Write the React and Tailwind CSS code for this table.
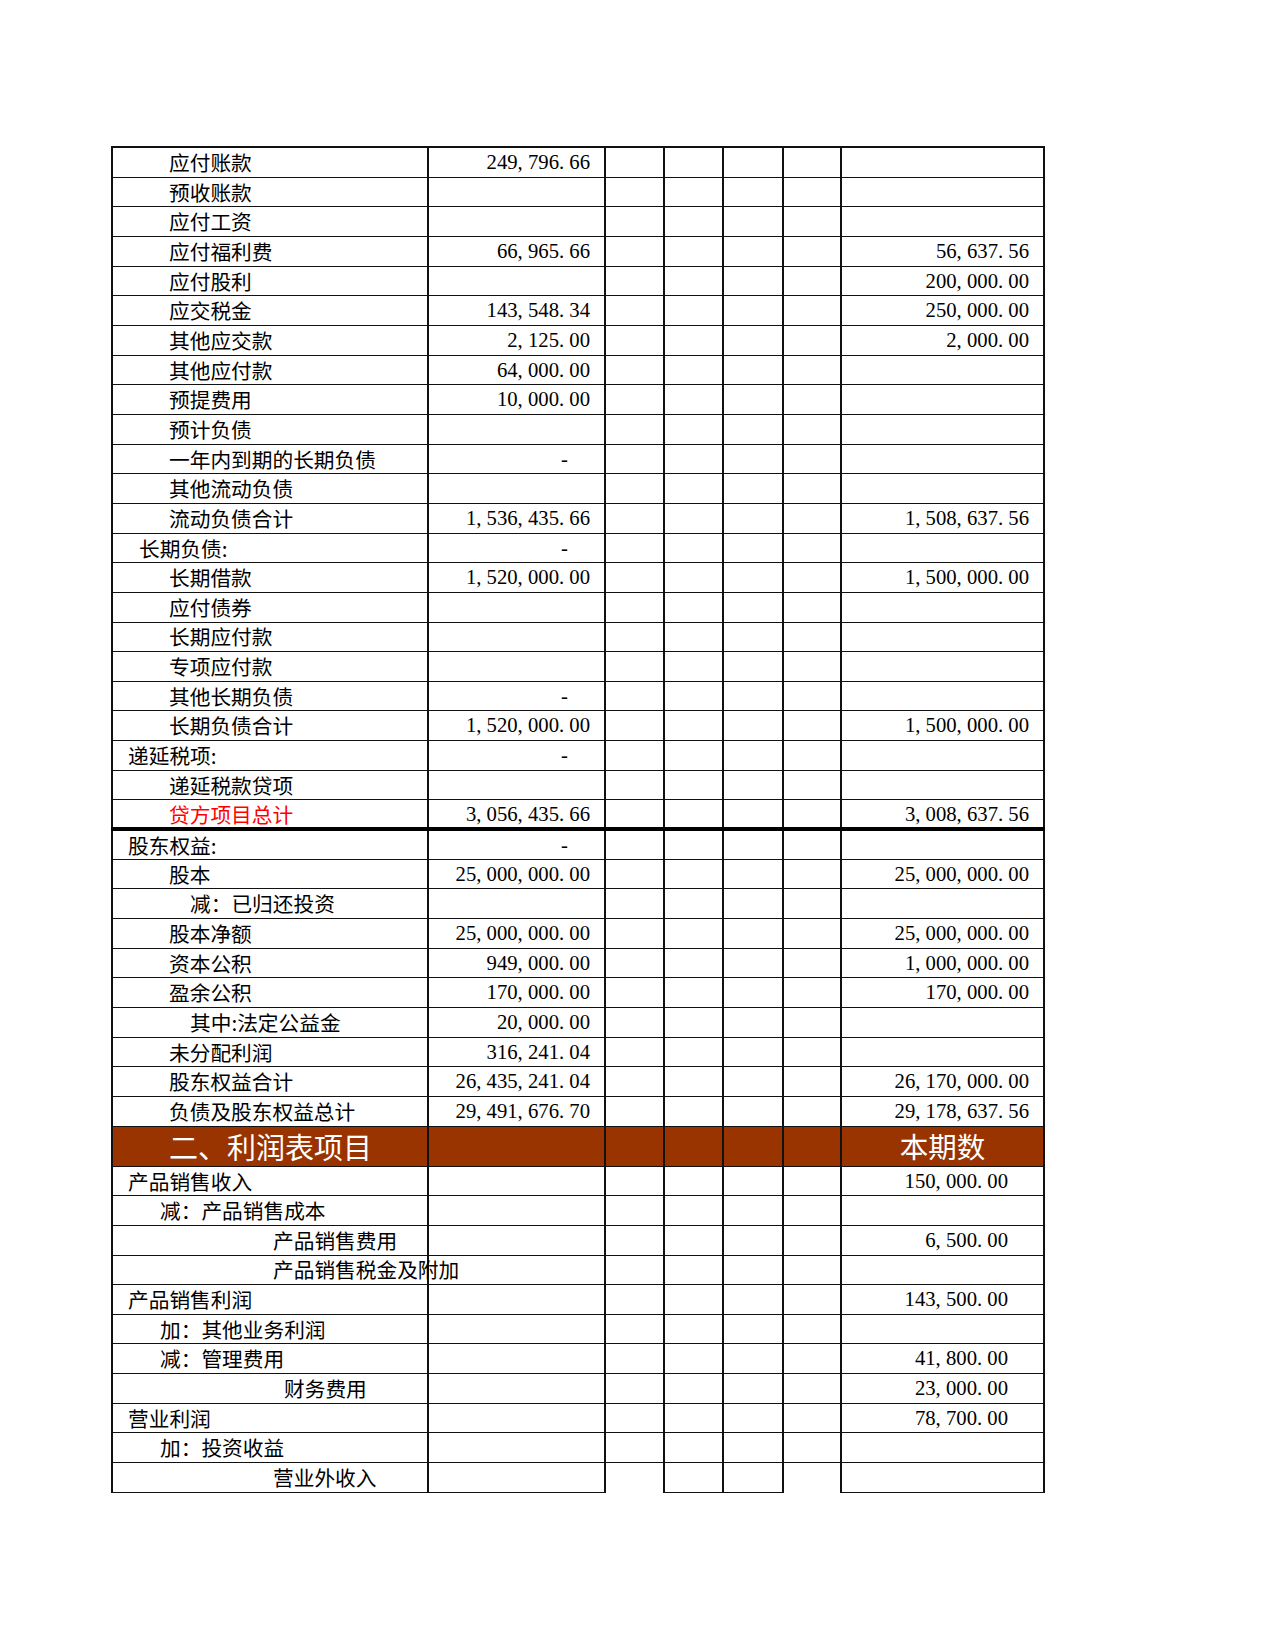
import React from "react";

const CJK = { fontFamily: '"Noto Sans CJK SC", "Noto Sans", sans-serif' };
const NUMF = { fontFamily: '"Liberation Serif", "Noto Sans CJK SC", serif' };

function Num({ v }) {
  return (
    <span style={NUMF} className="text-[20.7px] leading-none whitespace-nowrap">
      {v.split("").map((c, i) =>
        c === "," || c === "." ? (
          <span key={i} className="inline-block w-[0.5em] text-left">
            {c}
          </span>
        ) : (
          <span key={i}>{c}</span>
        )
      )}
    </span>
  );
}

const top = [
  ["应付账款", 56, "249,796.66", ""],
  ["预收账款", 56, "", ""],
  ["应付工资", 56, "", ""],
  ["应付福利费", 56, "66,965.66", "56,637.56"],
  ["应付股利", 56, "", "200,000.00"],
  ["应交税金", 56, "143,548.34", "250,000.00"],
  ["其他应交款", 56, "2,125.00", "2,000.00"],
  ["其他应付款", 56, "64,000.00", ""],
  ["预提费用", 56, "10,000.00", ""],
  ["预计负债", 56, "", ""],
  ["一年内到期的长期负债", 56, "-", ""],
  ["其他流动负债", 56, "", ""],
  ["流动负债合计", 56, "1,536,435.66", "1,508,637.56"],
  ["长期负债:", 26, "-", ""],
  ["长期借款", 56, "1,520,000.00", "1,500,000.00"],
  ["应付债券", 56, "", ""],
  ["长期应付款", 56, "", ""],
  ["专项应付款", 56, "", ""],
  ["其他长期负债", 56, "-", ""],
  ["长期负债合计", 56, "1,520,000.00", "1,500,000.00"],
  ["递延税项:", 15, "-", ""],
  ["递延税款贷项", 56, "", ""],
  ["贷方项目总计", 56, "3,056,435.66", "3,008,637.56", "red"],
  ["股东权益:", 15, "-", ""],
  ["股本", 56, "25,000,000.00", "25,000,000.00"],
  ["减：已归还投资", 77, "", ""],
  ["股本净额", 56, "25,000,000.00", "25,000,000.00"],
  ["资本公积", 56, "949,000.00", "1,000,000.00"],
  ["盈余公积", 56, "170,000.00", "170,000.00"],
  ["其中:法定公益金", 77, "20,000.00", ""],
  ["未分配利润", 56, "316,241.04", ""],
  ["股东权益合计", 56, "26,435,241.04", "26,170,000.00"],
  ["负债及股东权益总计", 56, "29,491,676.70", "29,178,637.56"],
];

const bottom = [
  ["产品销售收入", 15, "150,000.00"],
  ["减：产品销售成本", 47, ""],
  ["产品销售费用", 160, "6,500.00"],
  ["产品销售税金及附加", 160, ""],
  ["产品销售利润", 15, "143,500.00"],
  ["加：其他业务利润", 47, ""],
  ["减：管理费用", 47, "41,800.00"],
  ["财务费用", 171, "23,000.00"],
  ["营业利润", 15, "78,700.00"],
  ["加：投资收益", 47, ""],
  ["营业外收入", 160, ""],
];

const GRID = "grid grid-cols-[318px_177px_59px_59px_60px_58px_203px]";

function NumCell({ v, pr }) {
  return (
    <div
      className={
        "flex items-center justify-end border-r-2 border-[#111] " +
        (pr === 36 ? "pr-[36px]" : "pr-[14px]")
      }
    >
      {v === "-" ? (
        <span style={NUMF} className="text-[20.7px] leading-none">-</span>
      ) : v ? (
        <Num v={v} />
      ) : null}
    </div>
  );
}

function Label({ text, indent, red }) {
  return (
    <div className="relative flex items-center border-l-2 border-r-2 border-[#111] overflow-visible">
      <span
        style={{ ...CJK, paddingLeft: indent }}
        className={
          "text-[20.7px] leading-none whitespace-nowrap relative z-10 " +
          (red ? "text-[#ff0000]" : "text-black")
        }
      >
        {text}
      </span>
    </div>
  );
}

function Empty() {
  return <div className="border-r-2 border-[#111]" />;
}

export default function App() {
  return (
    <div className="w-[1275px] min-h-[1650px] bg-white pt-[146px]">
      <div className="ml-[111px] w-[934px] border-t-2 border-[#111]">
        {top.map(([label, indent, a, b, red], i) => (
          <div
            key={i}
            className={
              GRID +
              " " +
              (label === "贷方项目总计"
                ? "h-[31px] border-b-[4px] border-black"
                : label === "股东权益:"
                ? "h-[28.3px] border-b-[1.5px] border-[#111]"
                : "h-[29.67px] border-b-[1.5px] border-[#111]")
            }
          >
            <Label text={label} indent={indent} red={!!red} />
            <NumCell v={a} pr={a === "-" ? 36 : 14} />
            <Empty />
            <Empty />
            <Empty />
            <Empty />
            <NumCell v={b} pr={14} />
          </div>
        ))}
        <div className={GRID + " h-[40px] bg-[#993300] border-b-[1.5px] border-[#111]"}>
          <div className="flex items-center border-l-2 border-r-2 border-[#111]">
            <span style={CJK} className="pl-[56px] text-[29px] leading-none text-white whitespace-nowrap">
              二、利润表项目
            </span>
          </div>
          <Empty />
          <Empty />
          <Empty />
          <Empty />
          <Empty />
          <div className="flex items-center justify-center border-r-2 border-[#111]">
            <span style={CJK} className="text-[28.5px] leading-none text-white whitespace-nowrap">
              本期数
            </span>
          </div>
        </div>
        {bottom.map(([label, indent, v], i) => {
          const lastRow = i === bottom.length - 1;
          const bb = "border-b-[1.5px] border-[#111]";
          return (
            <div key={i} className={GRID + " h-[29.64px]"}>
              <div className={"relative flex items-center border-l-2 border-r-2 border-[#111] " + bb}>
                <span
                  style={{ ...CJK, paddingLeft: indent }}
                  className="text-[20.7px] leading-none whitespace-nowrap text-black relative z-10"
                >
                  {label}
                </span>
              </div>
              <div className={"border-r-2 border-[#111] " + bb} />
              <div className={"border-r-2 border-[#111] " + (lastRow ? "" : bb)} />
              <div className={"border-r-2 border-[#111] " + bb} />
              <div className={"border-r-2 border-[#111] " + bb} />
              <div className={"border-r-2 border-[#111] " + (lastRow ? "" : bb)} />
              <div className={"flex items-center justify-end pr-[35px] border-r-2 border-[#111] " + bb}>
                {v ? <Num v={v} /> : null}
              </div>
            </div>
          );
        })}
      </div>
    </div>
  );
}
